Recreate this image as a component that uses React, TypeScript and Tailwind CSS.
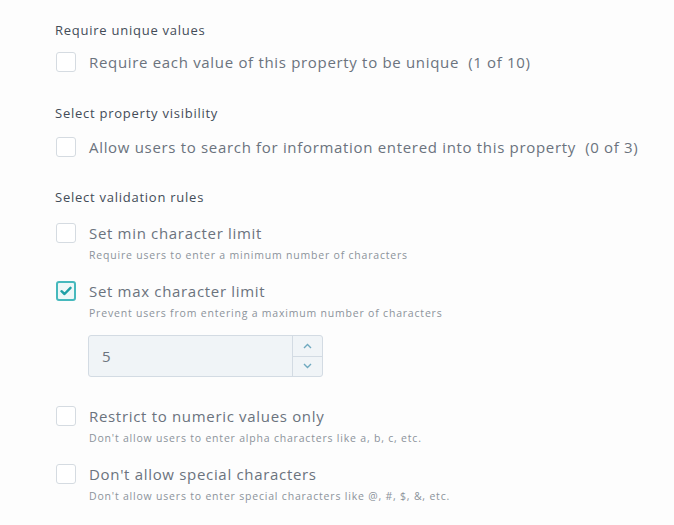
import { useState } from 'react'

type Rule = {
  label: string
  help?: string
  checked?: boolean
}

function Checkbox({ checked, onToggle }: { checked: boolean; onToggle: () => void }) {
  return (
    <button
      type="button"
      onClick={onToggle}
      className={
        checked
          ? 'flex h-[20px] w-[20px] shrink-0 items-center justify-center rounded-[3px] border-2 border-[#46b9bd] bg-[#eef8f8]'
          : 'flex h-[20px] w-[20px] shrink-0 items-center justify-center rounded-[3px] border border-[#d5dbe1] bg-white'
      }
    >
      {checked && (
        <svg width="12" height="10" viewBox="0 0 12 10" fill="none">
          <path d="M1.5 5.2 4.5 8 10.5 1.8" stroke="#20a0a6" strokeWidth="2.4" strokeLinecap="round" strokeLinejoin="round" />
        </svg>
      )}
    </button>
  )
}

function Heading({ children }: { children: React.ReactNode }) {
  return <div className="pl-[55px] text-[13px] leading-[16px] tracking-[0.75px] text-[#434c58]">{children}</div>
}

function CheckRow({ rule, onToggle }: { rule: Rule; onToggle: () => void }) {
  return (
    <div className="flex gap-[13px] pl-[56px]">
      <Checkbox checked={!!rule.checked} onToggle={onToggle} />
      <div>
        <div className="whitespace-pre text-[15px] leading-[20px] tracking-[0.68px] text-[#6b737e]">{rule.label}</div>
        {rule.help && (
          <div className="mt-[5px] text-[10.5px] leading-[14px] tracking-[0.8px] text-[#8c939b]">{rule.help}</div>
        )}
      </div>
    </div>
  )
}

export default function App() {
  const [unique, setUnique] = useState(false)
  const [searchable, setSearchable] = useState(false)
  const [rules, setRules] = useState<Rule[]>([
    { label: 'Set min character limit', help: 'Require users to enter a minimum number of characters' },
    { label: 'Set max character limit', help: 'Prevent users from entering a maximum number of characters', checked: true },
    { label: 'Restrict to numeric values only', help: "Don't allow users to enter alpha characters like a, b, c, etc." },
    { label: "Don't allow special characters", help: "Don't allow users to enter special characters like @, #, $, &, etc." }
  ])
  const [maxChars, setMaxChars] = useState(5)

  const toggleRule = (idx: number) => {
    setRules(rules.map((r, i) => (i === idx ? { ...r, checked: !r.checked } : r)))
  }

  return (
    <div className="h-[525px] w-[674px] overflow-hidden bg-[#fdfdfd] pt-[22px] font-['Open_Sans',sans-serif]">
      <Heading>Require unique values</Heading>
      <div className="mt-[14px]">
        <CheckRow
          rule={{ label: 'Require each value of this property to be unique  (1 of 10)', checked: unique }}
          onToggle={() => setUnique(!unique)}
        />
      </div>

      <div className="mt-[33px]">
        <Heading>Select property visibility</Heading>
      </div>
      <div className="mt-[16px]">
        <CheckRow
          rule={{ label: 'Allow users to search for information entered into this property  (0 of 3)', checked: searchable }}
          onToggle={() => setSearchable(!searchable)}
        />
      </div>

      <div className="mt-[32px]">
        <Heading>Select validation rules</Heading>
      </div>

      <div className="mt-[18px] flex flex-col gap-[19px]">
        {rules.slice(0, 2).map((rule, i) => (
          <CheckRow key={rule.label} rule={rule} onToggle={() => toggleRule(i)} />
        ))}
      </div>

      {rules[1].checked && (
        <div className="mt-[15px] pl-[88px]">
          <div className="flex h-[42px] w-[235px] rounded-[3px] border border-[#d3dbe3] bg-[#f0f4f7]">
            <input
              value={maxChars}
              onChange={(e) => setMaxChars(Number(e.target.value) || 0)}
              className="w-full bg-transparent pl-[13px] text-[15px] text-[#6b737d] outline-none"
            />
            <div className="flex w-[30px] shrink-0 flex-col border-l border-[#d3dbe3]">
              <button
                type="button"
                onClick={() => setMaxChars(maxChars + 1)}
                className="flex flex-1 items-center justify-center border-b border-[#d3dbe3]"
              >
                <svg width="9" height="6" viewBox="0 0 9 6" fill="none">
                  <path d="M1 5 4.5 1.5 8 5" stroke="#6fa9bf" strokeWidth="1.4" />
                </svg>
              </button>
              <button
                type="button"
                onClick={() => setMaxChars(Math.max(0, maxChars - 1))}
                className="flex flex-1 items-center justify-center"
              >
                <svg width="9" height="6" viewBox="0 0 9 6" fill="none">
                  <path d="M1 1 4.5 4.5 8 1" stroke="#6fa9bf" strokeWidth="1.4" />
                </svg>
              </button>
            </div>
          </div>
        </div>
      )}

      <div className="mt-[29px] flex flex-col gap-[19px]">
        {rules.slice(2).map((rule, i) => (
          <CheckRow key={rule.label} rule={rule} onToggle={() => toggleRule(i + 2)} />
        ))}
      </div>
    </div>
  )
}
